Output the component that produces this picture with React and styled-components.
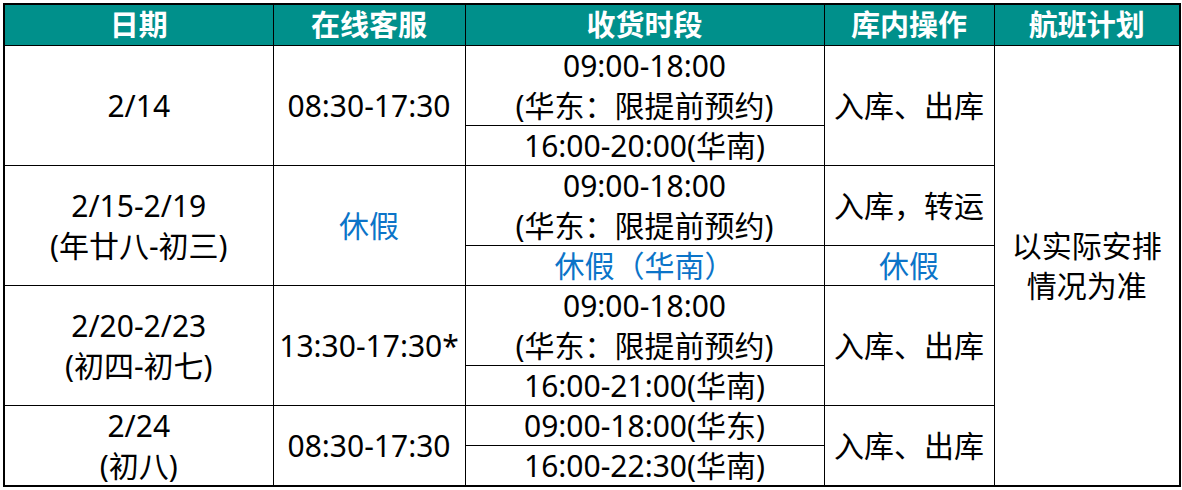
import React from "react";
import styled, { createGlobalStyle } from "styled-components";

const GlobalStyle = createGlobalStyle`
  html, body { margin: 0; padding: 0; background: #ffffff; }
  body { font-family: "Noto Sans", "Noto Sans CJK SC", sans-serif; }
`;

const Page = styled.div`
  padding: 3px 0 0 3px;
`;

const Table = styled.table`
  width: 1176px;
  table-layout: fixed;
  border-collapse: collapse;
  border: 2px solid #000;
  font-family: "Noto Sans", "Noto Sans CJK SC", sans-serif;
  font-size: 30px;
  color: #000;
`;

const HeadCell = styled.th`
  height: 40px;
  padding: 0;
  background: #00908b;
  color: #fff;
  font-weight: 700;
  font-size: 29px;
  line-height: 40px;
  text-align: center;
  border: 1.5px solid #000;
`;

const Cell = styled.td`
  height: 39px;
  padding: 0;
  text-align: center;
  vertical-align: middle;
  line-height: 39px;
  border: 1px solid #000;
  white-space: nowrap;
  color: ${(p) => (p.$blue ? "#0b74c8" : "#000")};
`;

const Line = styled.div`
  line-height: 39.5px;
`;

const Col = styled.col`
  width: ${(p) => p.$w}px;
`;

const Lines = ({ items }) => items.map((t, i) => <Line key={i}>{t}</Line>);

export default function App() {
  return (
    <>
      <GlobalStyle />
      <Page>
        <Table>
          <colgroup>
            <Col $w={269} />
            <Col $w={192} />
            <Col $w={359} />
            <Col $w={170} />
            <Col $w={186} />
          </colgroup>
          <thead>
            <tr>
              <HeadCell>日期</HeadCell>
              <HeadCell>在线客服</HeadCell>
              <HeadCell>收货时段</HeadCell>
              <HeadCell>库内操作</HeadCell>
              <HeadCell>航班计划</HeadCell>
            </tr>
          </thead>
          <tbody>
            <tr>
              <Cell rowSpan={2}>2/14</Cell>
              <Cell rowSpan={2}>08:30-17:30</Cell>
              <Cell>
                <Lines items={["09:00-18:00", "(华东：限提前预约)"]} />
              </Cell>
              <Cell rowSpan={2}>入库、出库</Cell>
              <Cell rowSpan={8}>
                <Lines items={["以实际安排", "情况为准"]} />
              </Cell>
            </tr>
            <tr>
              <Cell>16:00-20:00(华南)</Cell>
            </tr>
            <tr>
              <Cell rowSpan={2}>
                <Lines items={["2/15-2/19", "(年廿八-初三)"]} />
              </Cell>
              <Cell rowSpan={2} $blue>休假</Cell>
              <Cell>
                <Lines items={["09:00-18:00", "(华东：限提前预约)"]} />
              </Cell>
              <Cell>入库，转运</Cell>
            </tr>
            <tr>
              <Cell $blue>休假（华南）</Cell>
              <Cell $blue>休假</Cell>
            </tr>
            <tr>
              <Cell rowSpan={2}>
                <Lines items={["2/20-2/23", "(初四-初七)"]} />
              </Cell>
              <Cell rowSpan={2}>13:30-17:30*</Cell>
              <Cell>
                <Lines items={["09:00-18:00", "(华东：限提前预约)"]} />
              </Cell>
              <Cell rowSpan={2}>入库、出库</Cell>
            </tr>
            <tr>
              <Cell>16:00-21:00(华南)</Cell>
            </tr>
            <tr>
              <Cell rowSpan={2}>
                <Lines items={["2/24", "(初八)"]} />
              </Cell>
              <Cell rowSpan={2}>08:30-17:30</Cell>
              <Cell>09:00-18:00(华东)</Cell>
              <Cell rowSpan={2}>入库、出库</Cell>
            </tr>
            <tr>
              <Cell>16:00-22:30(华南)</Cell>
            </tr>
          </tbody>
        </Table>
      </Page>
    </>
  );
}
